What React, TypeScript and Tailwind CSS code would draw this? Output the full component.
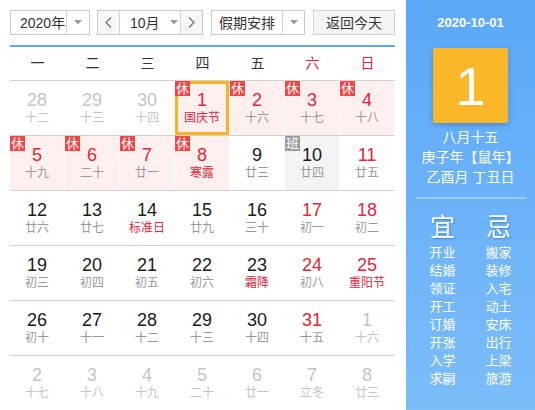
import React from "react";

type Cell = {
  n: number;
  l: string;
  other?: boolean;
  rest?: boolean;
  work?: boolean;
  today?: boolean;
  redNum?: boolean;
  redLunar?: boolean;
};

const rows: Cell[][] = [
  [
    { n: 28, l: "十二", other: true },
    { n: 29, l: "十三", other: true },
    { n: 30, l: "十四", other: true },
    { n: 1, l: "国庆节", rest: true, today: true, redNum: true, redLunar: true },
    { n: 2, l: "十六", rest: true, redNum: true },
    { n: 3, l: "十七", rest: true, redNum: true },
    { n: 4, l: "十八", rest: true, redNum: true },
  ],
  [
    { n: 5, l: "十九", rest: true, redNum: true },
    { n: 6, l: "二十", rest: true, redNum: true },
    { n: 7, l: "廿一", rest: true, redNum: true },
    { n: 8, l: "寒露", rest: true, redNum: true, redLunar: true },
    { n: 9, l: "廿三" },
    { n: 10, l: "廿四", work: true },
    { n: 11, l: "廿五", redNum: true },
  ],
  [
    { n: 12, l: "廿六" },
    { n: 13, l: "廿七" },
    { n: 14, l: "标准日", redLunar: true },
    { n: 15, l: "廿九" },
    { n: 16, l: "三十" },
    { n: 17, l: "初一", redNum: true },
    { n: 18, l: "初二", redNum: true },
  ],
  [
    { n: 19, l: "初三" },
    { n: 20, l: "初四" },
    { n: 21, l: "初五" },
    { n: 22, l: "初六" },
    { n: 23, l: "霜降", redLunar: true },
    { n: 24, l: "初八", redNum: true },
    { n: 25, l: "重阳节", redNum: true, redLunar: true },
  ],
  [
    { n: 26, l: "初十" },
    { n: 27, l: "十一" },
    { n: 28, l: "十二" },
    { n: 29, l: "十三" },
    { n: 30, l: "十四" },
    { n: 31, l: "十五", redNum: true },
    { n: 1, l: "十六", other: true },
  ],
  [
    { n: 2, l: "十七", other: true },
    { n: 3, l: "十八", other: true },
    { n: 4, l: "十九", other: true },
    { n: 5, l: "二十", other: true },
    { n: 6, l: "廿一", other: true },
    { n: 7, l: "立冬", other: true },
    { n: 8, l: "廿三", other: true },
  ],
];

const yi = ["开业", "结婚", "领证", "开工", "订婚", "开张", "入学", "求嗣"];
const ji = ["搬家", "装修", "入宅", "动土", "安床", "出行", "上梁", "旅游"];

function Tri() {
  return (
    <svg width="8" height="5" viewBox="0 0 8 5">
      <polygon points="0,0 8,0 4,4.5" fill="#9a9a9a" />
    </svg>
  );
}

function Chevron({ dir }: { dir: "l" | "r" }) {
  return (
    <svg width="7" height="11" viewBox="0 0 7 11">
      <polyline
        points={dir === "l" ? "6,0.5 1,5.5 6,10.5" : "1,0.5 6,5.5 1,10.5"}
        fill="none"
        stroke="#666"
        strokeWidth="1.1"
      />
    </svg>
  );
}

function DayCell({ c }: { c: Cell }) {
  const bg = c.rest ? "bg-[#fff0f0]" : c.work ? "bg-[#f4f4f4]" : "bg-white";
  const numColor = c.other
    ? "text-[#c4c4c4]"
    : c.redNum
    ? "text-[#e4253b]"
    : "text-[#1a1a1a]";
  const lunColor = c.other
    ? "text-[#c4c4c4]"
    : c.redLunar
    ? "text-[#e4253b]"
    : "text-[#999999]";
  return (
    <div className={`relative h-[54px] mr-px flex flex-col items-center pt-[9px] ${bg}`}>
      {c.today && (
        <div className="absolute inset-0 border-[3px] border-[#f8b422]" />
      )}
      {c.rest && (
        <div className="absolute left-0 top-0 z-10 w-[15px] h-[15px] bg-[#f34545] text-white text-[13px] leading-[15px] text-center">
          休
        </div>
      )}
      {c.work && (
        <div className="absolute left-0 top-0 z-10 w-[15px] h-[15px] bg-[#9b9b9b] text-white text-[13px] leading-[15px] text-center">
          班
        </div>
      )}
      <div className={`text-[18px] leading-[20px] ${numColor}`}>{c.n}</div>
      <div className={`text-[12px] leading-[16px] ${lunColor}`}>{c.l}</div>
    </div>
  );
}

export default function App() {
  const weekdays = ["一", "二", "三", "四", "五", "六", "日"];
  return (
    <div className="flex w-[535px] h-[410px] overflow-hidden bg-white font-['Liberation_Sans','Noto_Sans_CJK_SC',sans-serif]">
      <div className="w-[385px] ml-[10px] pt-[10px] flex flex-col">
        {/* toolbar */}
        <div className="flex h-[25px] text-[14px] text-[#333] whitespace-nowrap">
          <div className="w-[80px] h-[25px] border border-[#c8c8c8] flex bg-white">
            <div className="w-[55px] pl-[9px] flex items-center leading-none whitespace-nowrap">2020年</div>
            <div className="flex-1 border-l border-[#d4d4d4] flex items-center justify-center">
              <Tri />
            </div>
          </div>
          <div className="ml-[7px] w-[106px] h-[25px] border border-[#c8c8c8] flex bg-white">
            <div className="w-[22px] bg-[#f7f7f7] border-r border-[#d4d4d4] flex items-center justify-center">
              <Chevron dir="l" />
            </div>
            <div className="flex-1 flex items-center pl-[10px]">
              <span className="leading-none">10月</span>
              <span className="ml-[10px] flex items-center">
                <Tri />
              </span>
            </div>
            <div className="w-[22px] bg-[#f7f7f7] border-l border-[#d4d4d4] flex items-center justify-center">
              <Chevron dir="r" />
            </div>
          </div>
          <div className="ml-[8px] w-[94px] h-[25px] border border-[#c8c8c8] flex bg-white">
            <div className="w-[70px] flex items-center justify-center leading-none">假期安排</div>
            <div className="flex-1 border-l border-[#d4d4d4] flex items-center justify-center">
              <Tri />
            </div>
          </div>
          <div className="ml-[8px] w-[82px] h-[25px] border border-[#d0d0d0] bg-[#f5f5f5] flex items-center justify-center leading-none">
            返回今天
          </div>
        </div>
        <div className="mt-[10px] h-[2px] bg-[#5ca9f8]" />
        {/* weekday header */}
        <div className="grid grid-cols-7 h-[33px] text-[14px]">
          {weekdays.map((w, i) => (
            <div
              key={w}
              className={`flex items-center justify-center ${i >= 5 ? "text-[#e4253b]" : "text-[#333]"}`}
            >
              {w}
            </div>
          ))}
        </div>
        {rows.map((r, ri) => (
          <div key={ri} className="grid grid-cols-7 border-t border-[#d2d2d2]">
            {r.map((c, ci) => (
              <DayCell key={ci} c={c} />
            ))}
          </div>
        ))}
      </div>
      {/* right panel */}
      <div className="ml-[11px] w-[129px] h-[410px] bg-linear-to-b from-[#5ba8f8] to-[#7cbdfa] flex flex-col items-center pt-[15px] text-white">
        <div className="text-[13px] leading-[16px] font-bold">2020-10-01</div>
        <div className="mt-[17px] w-[75px] h-[75px] rounded-[2px] bg-[#fbb62a] shadow-[0_2px_5px_rgba(40,90,160,0.45)] flex items-center justify-center text-[54px] leading-none">
          1
        </div>
        <div className="mt-[4px] text-[14px] leading-[20px]">八月十五</div>
        <div className="text-[14px] leading-[20px]">庚子年【鼠年】</div>
        <div className="text-[14px] leading-[20px]">乙酉月 丁丑日</div>
        <div className="mt-[10px] w-[110px] h-[2px] bg-[#9acbfb]" />
        <div className="mt-[13px] flex">
          <div className="w-[56px] flex flex-col items-center">
            <div className="text-[25px] leading-[30px] [text-shadow:1px_1px_2px_rgba(30,80,150,0.5)]">宜</div>
            <div className="mt-[2px] flex flex-col items-center text-[13px] leading-[18px]">
              {yi.map((t) => (
                <div key={t}>{t}</div>
              ))}
            </div>
          </div>
          <div className="w-[56px] flex flex-col items-center">
            <div className="text-[25px] leading-[30px] [text-shadow:1px_1px_2px_rgba(30,80,150,0.5)]">忌</div>
            <div className="mt-[2px] flex flex-col items-center text-[13px] leading-[18px]">
              {ji.map((t) => (
                <div key={t}>{t}</div>
              ))}
            </div>
          </div>
        </div>
      </div>
    </div>
  );
}
